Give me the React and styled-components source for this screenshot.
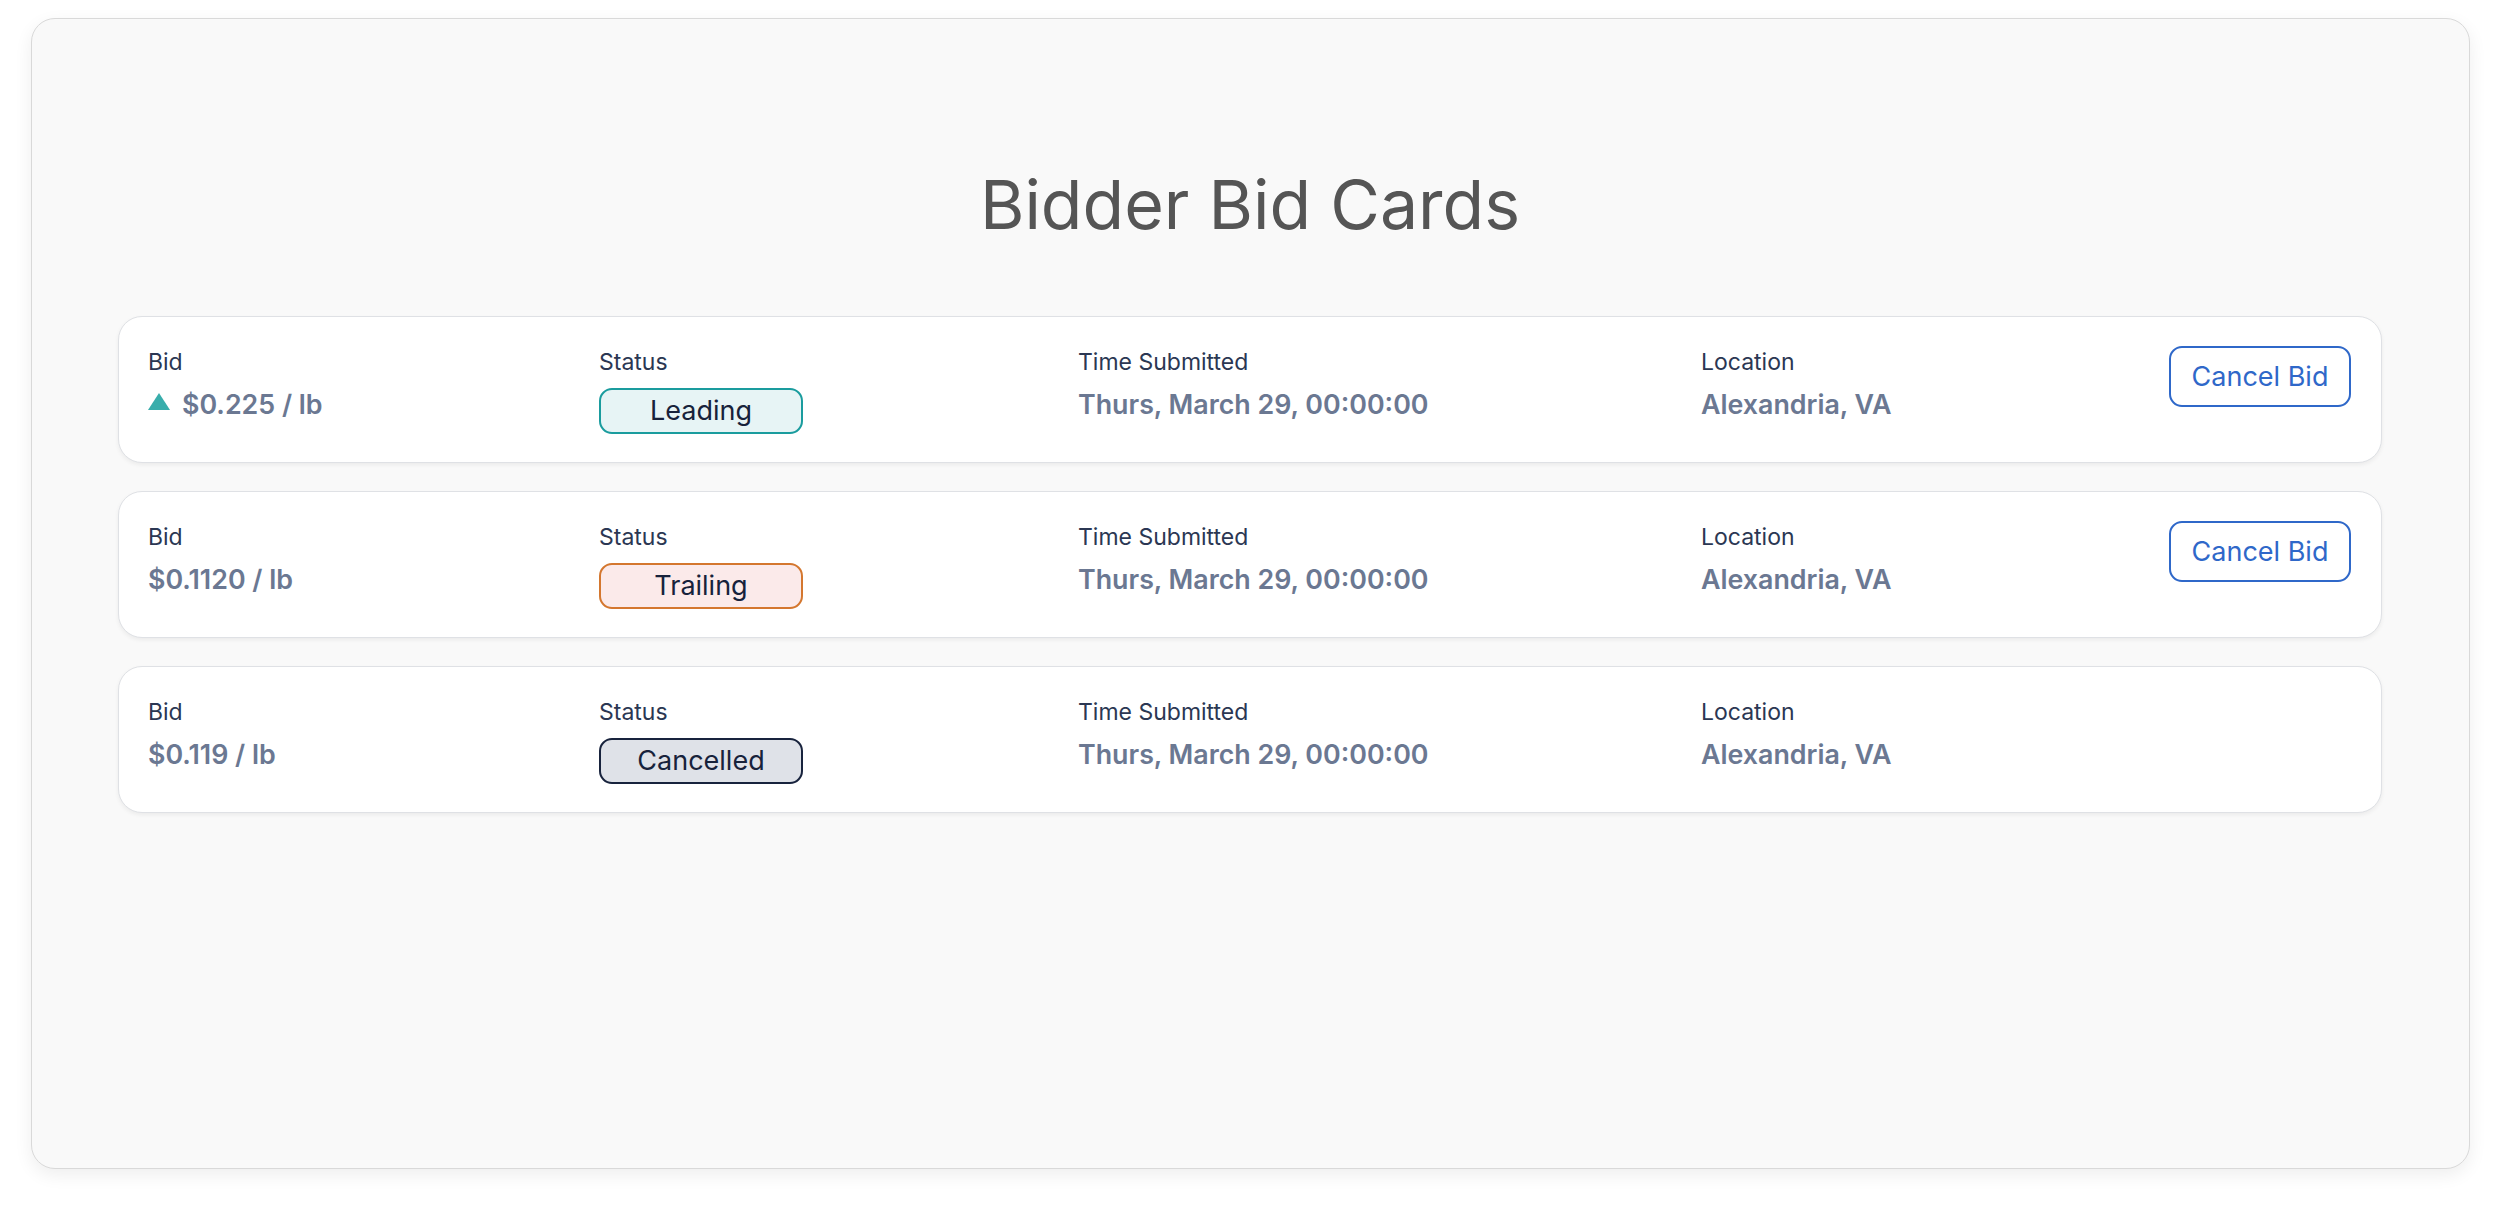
import React from "react";
import styled, { createGlobalStyle } from "styled-components";

const Global = createGlobalStyle`
  html, body { margin: 0; padding: 0; background: #ffffff; }
  body { font-family: Inter, "Noto Sans", "Liberation Sans", sans-serif; }
  * { box-sizing: border-box; }
`;

const Page = styled.div`
  padding: 18px 30px 42px 31px;
`;

const Panel = styled.div`
  height: 1151px;
  background: #f9f9f9;
  border: 1px solid #d9d9d9;
  border-radius: 24px;
  box-shadow: 0 6px 18px rgba(0, 0, 0, 0.07);
  padding: 145px 87px 0 86px;
  display: flex;
  flex-direction: column;
`;

const Title = styled.h1`
  margin: 0 0 72px;
  text-align: center;
  font-size: 68px;
  font-weight: 400;
  line-height: 80px;
  color: #555555;
`;

const List = styled.div`
  display: flex;
  flex-direction: column;
  gap: 28px;
`;

const Card = styled.div`
  background: #ffffff;
  border: 1.5px solid #dfe1e5;
  border-radius: 24px;
  box-shadow: 0 2px 4px rgba(0, 0, 0, 0.06);
  padding: 29px 30px 27px 29px;
  display: grid;
  grid-template-columns: 451px 479px 623px 1fr auto;
  align-items: start;
  min-height: 147px;
`;

const Field = styled.div`
  display: flex;
  flex-direction: column;
`;

const Label = styled.div`
  font-size: 23px;
  line-height: 33px;
  color: #2b3753;
  font-weight: 400;
`;

const Value = styled.div`
  margin-top: 5px;
  font-size: 26.8px;
  line-height: 40px;
  font-weight: 600;
  color: #6b7892;
  display: flex;
  align-items: center;
  gap: 12px;
`;

const Badge = styled.div`
  margin-top: 9px;
  width: 204px;
  height: 46px;
  border-radius: 13px;
  border: 2px solid ${(p) => p.$border};
  background: ${(p) => p.$bg};
  color: #17223b;
  font-size: 27px;
  line-height: 42px;
  text-align: center;
`;

const CancelButton = styled.button`
  justify-self: end;
  width: 182px;
  height: 61px;
  border: 2px solid #2f68c9;
  border-radius: 13px;
  background: #ffffff;
  color: #2f68c9;
  font-family: Inter, "Noto Sans", "Liberation Sans", sans-serif;
  font-size: 27px;
  font-weight: 400;
  padding: 0;
  margin-top: 0;
`;

const Up = () => (
  <svg width="22" height="17" viewBox="0 0 22 17" style={{ marginBottom: 6 }}>
    <polygon points="11,0 22,17 0,17" fill="#38adab" />
  </svg>
);

const statusStyles = {
  Leading: { border: "#1a9c9e", bg: "#e7f4f5" },
  Trailing: { border: "#d4772f", bg: "#fbeaea" },
  Cancelled: { border: "#18233d", bg: "#dfe2e8" },
};

const bids = [
  { bid: "$0.225 / lb", up: true, status: "Leading", cancel: true },
  { bid: "$0.1120 / lb", status: "Trailing", cancel: true },
  { bid: "$0.119 / lb", status: "Cancelled", cancel: false },
];

export default function App() {
  return (
    <>
      <Global />
      <Page>
        <Panel>
          <Title>Bidder Bid Cards</Title>
          <List>
            {bids.map((b, i) => (
              <Card key={i}>
                <Field>
                  <Label>Bid</Label>
                  <Value>
                    {b.up && <Up />}
                    {b.bid}
                  </Value>
                </Field>
                <Field>
                  <Label>Status</Label>
                  <Badge
                    $border={statusStyles[b.status].border}
                    $bg={statusStyles[b.status].bg}
                  >
                    {b.status}
                  </Badge>
                </Field>
                <Field>
                  <Label>Time Submitted</Label>
                  <Value>Thurs, March 29, 00:00:00</Value>
                </Field>
                <Field>
                  <Label>Location</Label>
                  <Value>Alexandria, VA</Value>
                </Field>
                {b.cancel && <CancelButton>Cancel Bid</CancelButton>}
              </Card>
            ))}
          </List>
        </Panel>
      </Page>
    </>
  );
}
